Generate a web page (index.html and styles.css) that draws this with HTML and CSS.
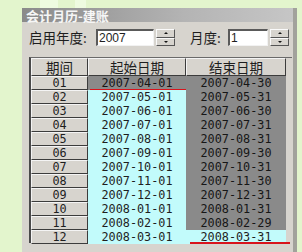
FILE: index.html
```html
<!DOCTYPE html>
<html lang="zh">
  <head>
    <meta charset="UTF-8" />
    <title>会计月历-建账</title>
    <link rel="stylesheet" href="styles.css">
  </head>
  <body>
    <div class="window">
      <div class="titlebar">会计月历-建账</div>
      <div class="panel">
        <div class="form-row">
          <label class="field-label">启用年度:</label>
          <div class="text-input year">2007</div>
          <div class="spin">
            <span class="spin-btn"><i class="arrow up"></i></span>
            <span class="spin-btn"><i class="arrow down"></i></span>
          </div>
          <label class="field-label month-label">月度:</label>
          <div class="text-input month">1</div>
          <div class="spin">
            <span class="spin-btn"><i class="arrow up"></i></span>
            <span class="spin-btn"><i class="arrow down"></i></span>
          </div>
        </div>

        <div class="grid">
          <div class="head">期间</div>
          <div class="head">起始日期</div>
          <div class="head">结束日期</div>

          <div class="rowhead">01</div>
          <div class="cell dark marked">2007-04-01</div>
          <div class="cell dark">2007-04-30</div>

          <div class="rowhead">02</div>
          <div class="cell">2007-05-01</div>
          <div class="cell dark">2007-05-31</div>

          <div class="rowhead">03</div>
          <div class="cell">2007-06-01</div>
          <div class="cell dark">2007-06-30</div>

          <div class="rowhead">04</div>
          <div class="cell">2007-07-01</div>
          <div class="cell dark">2007-07-31</div>

          <div class="rowhead">05</div>
          <div class="cell">2007-08-01</div>
          <div class="cell dark">2007-08-31</div>

          <div class="rowhead">06</div>
          <div class="cell">2007-09-01</div>
          <div class="cell dark">2007-09-30</div>

          <div class="rowhead">07</div>
          <div class="cell">2007-10-01</div>
          <div class="cell dark">2007-10-31</div>

          <div class="rowhead">08</div>
          <div class="cell">2007-11-01</div>
          <div class="cell dark">2007-11-30</div>

          <div class="rowhead">09</div>
          <div class="cell">2007-12-01</div>
          <div class="cell dark">2007-12-31</div>

          <div class="rowhead">10</div>
          <div class="cell">2008-01-01</div>
          <div class="cell dark">2008-01-31</div>

          <div class="rowhead">11</div>
          <div class="cell">2008-02-01</div>
          <div class="cell dark">2008-02-29</div>

          <div class="rowhead">12</div>
          <div class="cell">2008-03-01</div>
          <div class="cell marked wide">2008-03-31</div>
        </div>
      </div>
    </div>
  </body>
</html>
```

FILE: styles.css
```css
:root {
  --page-green: #e3f5cd;
  --stripe-green: #eefbe0;
  --face: #d7d4ce;
  --dark-cell: #8a8a8a;
  --cyan-cell: #c2fbfb;
  --mark: #d8141c;
  --cjk: "Noto Sans CJK SC", "Noto Sans", sans-serif;
  --mono: "DejaVu Sans Mono", "Liberation Mono", monospace;
}

html,
body {
  margin: 0;
  height: 252px;
  overflow: hidden;
}

body {
  background: linear-gradient(
    to right,
    var(--page-green) 40px,
    var(--stripe-green) 40px 58px,
    var(--page-green) 58px 75px,
    var(--stripe-green) 75px 86px,
    var(--page-green) 86px
  );
  font-family: var(--cjk);
  color: #1e1e1e;
}

.window {
  margin: 8px 0 0 22px;
  width: 271px;
  height: 250px;
  background-color: var(--face);
  border-right: 4px solid #a2a29c;
}

.titlebar {
  display: flex;
  align-items: center;
  height: 14px;
  padding-left: 4px;
  font-size: 13px;
  line-height: 1;
  font-weight: bold;
  color: #f6f6f6;
  background: linear-gradient(to right, #8a8a8a, #b4b4b4 60%, #c6c6c6);
}

.panel {
  padding: 7px 0 0 7px;
}

.form-row {
  display: flex;
  align-items: center;
  height: 17px;
}

.field-label {
  font-size: 13.5px;
  line-height: 17px;
  width: 67px;
  white-space: nowrap;
}

.month-label {
  width: 38px;
  margin-left: 15px;
}

.text-input {
  box-sizing: border-box;
  height: 17px;
  background: #fff;
  border-top: 2px solid #5a5a5a;
  border-left: 2px solid #5a5a5a;
  border-right: 1px solid #f2f2f2;
  border-bottom: 1px solid #f2f2f2;
  font-family: "Liberation Sans", Arial, sans-serif;
  font-size: 12px;
  line-height: 14px;
  padding-left: 1px;
}

.year {
  width: 58px;
}

.month {
  width: 40px;
}

.spin {
  display: flex;
  flex-direction: column;
  width: 19px;
  height: 17px;
  margin-left: 2px;
}

.spin-btn {
  flex: 1;
  display: flex;
  align-items: center;
  justify-content: center;
  background: var(--face);
  border-top: 1px solid #fafafa;
  border-left: 1px solid #fafafa;
  border-right: 1px solid #555;
  border-bottom: 1px solid #555;
}

.arrow {
  width: 0;
  height: 0;
  border-left: 2px solid transparent;
  border-right: 2px solid transparent;
}

.arrow.up {
  border-bottom: 2px solid #111;
}

.arrow.down {
  border-top: 2px solid #111;
}

.grid {
  display: grid;
  grid-template-columns: 57px 98px 100px;
  grid-template-rows: 18px repeat(12, 14px);
  width: 263px;
  height: 186px;
  margin-top: 11px;
  border-left: 2px solid #4a4a4a;
  border-top: 1px solid #6a6a6a;
  box-sizing: border-box;
}

.head,
.rowhead {
  box-sizing: border-box;
  background: var(--face);
  border-top: 1px solid #f4f4f4;
  border-left: 1px solid #f4f4f4;
  border-right: 1px solid #3c3c3c;
  border-bottom: 1px solid #3c3c3c;
  text-align: center;
}

.head {
  font-size: 13.5px;
  line-height: 16px;
}

.rowhead {
  font-family: var(--mono);
  font-size: 11.8px;
  line-height: 12px;
}

.cell {
  position: relative;
  background: var(--cyan-cell);
  font-family: var(--mono);
  font-size: 11.8px;
  line-height: 14px;
  text-align: center;
}

.cell.dark {
  background: var(--dark-cell);
  color: #161616;
}

.marked::after {
  content: "";
  position: absolute;
  left: 2px;
  right: 0;
  bottom: -1px;
  height: 2px;
  background: var(--mark);
}

.marked.wide::after {
  left: 4px;
  right: -4px;
  bottom: 0;
}
```
